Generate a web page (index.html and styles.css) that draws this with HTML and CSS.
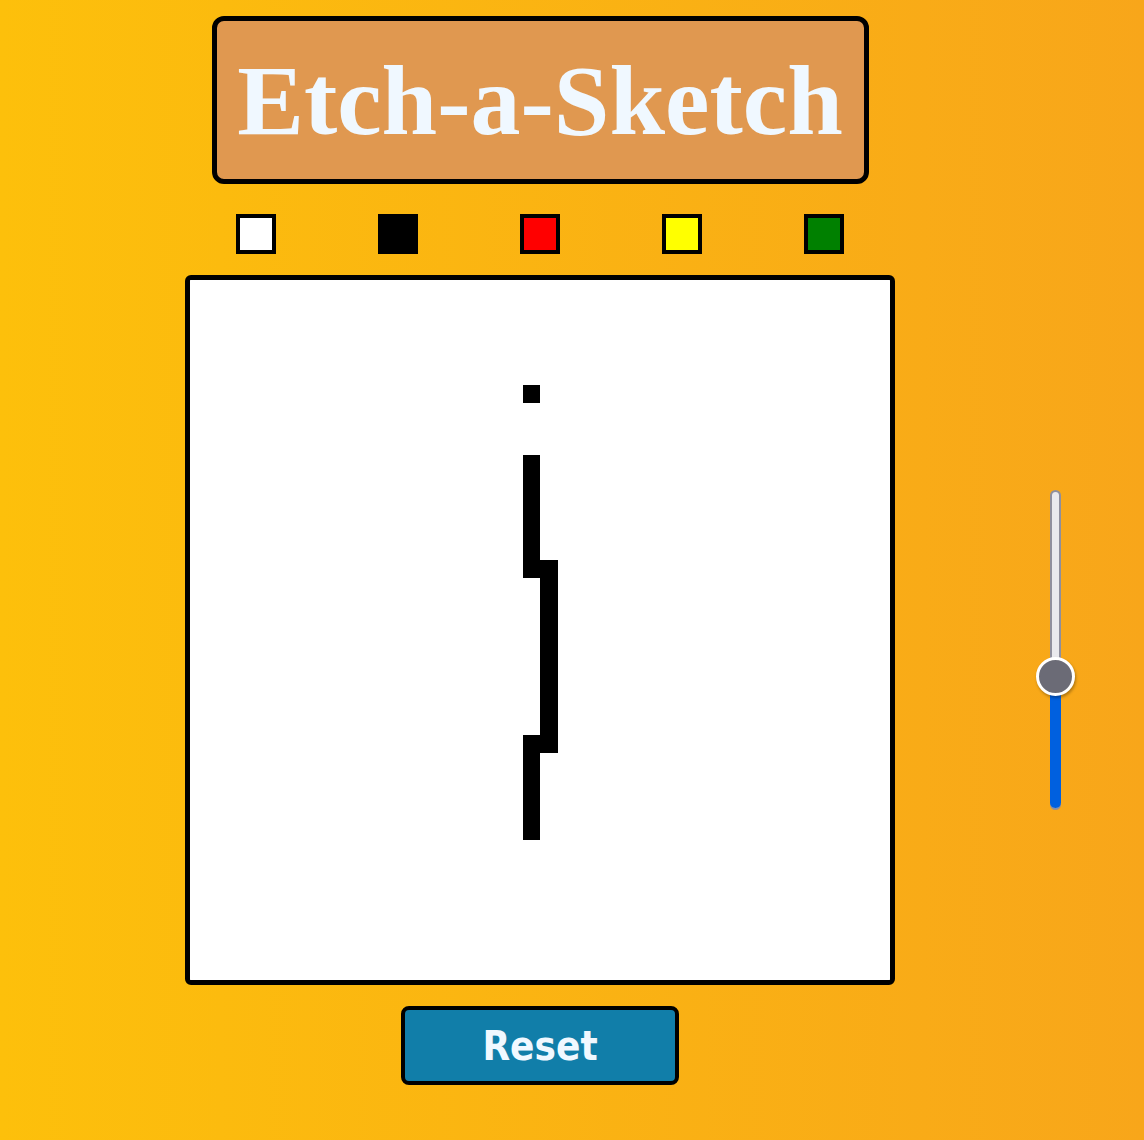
FILE: index.html
```html
<!DOCTYPE html>
<html lang="en">
<head>
<meta charset="utf-8">
<title>Etch-a-Sketch</title>
<link rel="stylesheet" href="styles.css">
</head>
<body>
<div class="page">
  <main class="app">
    <h1 class="title">Etch-a-Sketch</h1>
    <div class="palette">
      <button class="swatch swatch-white" aria-label="white"></button>
      <button class="swatch swatch-black" aria-label="black"></button>
      <button class="swatch swatch-red" aria-label="red"></button>
      <button class="swatch swatch-yellow" aria-label="yellow"></button>
      <button class="swatch swatch-green" aria-label="green"></button>
    </div>
    <div class="board" id="board"></div>
    <button class="reset">Reset</button>
  </main>
  <div class="slider" aria-label="grid size">
    <div class="track"></div>
    <div class="fill"></div>
    <div class="thumb"></div>
  </div>
</div>
<script src="script.js"></script>
</body>
</html>
```

FILE: styles.css
```css
html, body {
  margin: 0;
  padding: 0;
}
body {
  min-height: 1140px;
  background: linear-gradient(to right, #fdc00b, #f8a61a);
  font-family: "Liberation Serif", serif;
}
.page {
  display: flex;
  align-items: flex-start;
  padding: 16px 0 0 185px;
}
.app {
  width: 710px;
  display: flex;
  flex-direction: column;
  align-items: center;
}
.title {
  box-sizing: border-box;
  width: 657px;
  height: 168px;
  margin: 0;
  border: 5px solid #000;
  border-radius: 12px;
  background: #e09850;
  color: #f0f8ff;
  font: bold 100px "Liberation Serif", serif;
  display: flex;
  align-items: center;
  justify-content: center;
}
.palette {
  width: 710px;
  margin-top: 30px;
  display: flex;
  justify-content: space-around;
}
.swatch {
  box-sizing: border-box;
  width: 40px;
  height: 40px;
  padding: 0;
  border: 4px solid #000;
  border-radius: 0;
}
.swatch-white { background: #fff; }
.swatch-black { background: #000; }
.swatch-red { background: #f00; }
.swatch-yellow { background: #ff0; }
.swatch-green { background: #008000; }
.board {
  box-sizing: border-box;
  margin-top: 21px;
  width: 710px;
  height: 710px;
  border: 5px solid #000;
  border-radius: 6px;
  background: #fff;
  display: grid;
  grid-template-columns: repeat(40, 1fr);
  grid-template-rows: repeat(40, 1fr);
  overflow: hidden;
}
.cell {
  background: #fff;
}
.cell.on {
  background: #000;
}
.reset {
  box-sizing: border-box;
  margin-top: 21px;
  width: 278px;
  height: 79px;
  border: 4px solid #000;
  border-radius: 8px;
  background: #117ea9;
  color: #f0f8ff;
  font-family: "DejaVu Sans Condensed", "DejaVu Sans", sans-serif;
  font-stretch: condensed;
  font-weight: bold;
  font-size: 40px;
  padding: 0;
}
.slider {
  position: relative;
  width: 39px;
  height: 320px;
  margin-left: 141px;
  margin-top: 474px;
}
.track {
  position: absolute;
  box-sizing: border-box;
  left: 14px;
  top: 0;
  bottom: 0;
  width: 11px;
  border: 2px solid #8f8f9d;
  border-radius: 6px;
  background: #e9e9ed;
}
.fill {
  position: absolute;
  left: 14px;
  bottom: 2px;
  width: 11px;
  height: 140px;
  border-radius: 6px;
  background: #0060df;
}
.thumb {
  position: absolute;
  box-sizing: border-box;
  left: 0;
  top: 167px;
  width: 39px;
  height: 39px;
  border: 3px solid #fff;
  border-radius: 50%;
  background: #6b6b76;
  box-shadow: 1px 2px 3px rgba(0, 0, 0, 0.3);
}
```

FILE: script.js
```js
const board = document.getElementById('board');
const size = 40;
const drawn = new Set(['6,19']);
for (let r = 10; r <= 16; r++) drawn.add(r + ',19');
for (let r = 16; r <= 26; r++) drawn.add(r + ',20');
for (let r = 26; r <= 31; r++) drawn.add(r + ',19');
for (let r = 0; r < size; r++) {
  for (let c = 0; c < size; c++) {
    const cell = document.createElement('div');
    cell.className = 'cell' + (drawn.has(r + ',' + c) ? ' on' : '');
    board.appendChild(cell);
  }
}
```
